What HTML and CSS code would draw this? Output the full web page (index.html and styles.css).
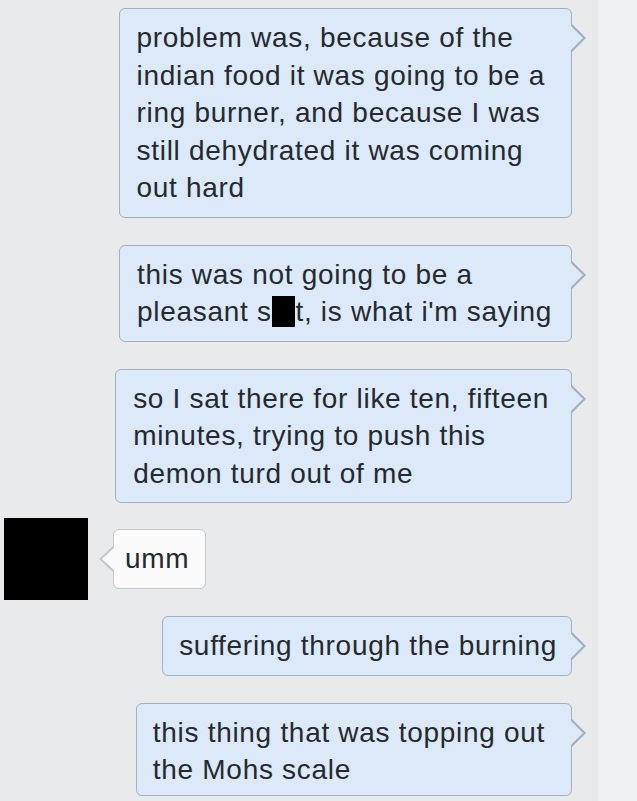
FILE: index.html
```html
<!DOCTYPE html>
<html lang="en">
<head>
<meta charset="utf-8">
<title>Chat</title>
<link rel="stylesheet" href="styles.css">
</head>
<body>
<div class="chat">
  <div class="row out">
    <div class="bubble sent b1">problem was, because of the<br>indian food it was going to be a<br>ring burner, and because I was<br>still dehydrated it was coming<br>out hard</div>
  </div>
  <div class="row out">
    <div class="bubble sent b2">this was not going to be a<br>pleasant s<span class="redact">hi</span>t, is what i'm saying</div>
  </div>
  <div class="row out">
    <div class="bubble sent b3">so I sat there for like ten, fifteen<br>minutes, trying to push this<br>demon turd out of me</div>
  </div>
  <div class="row in">
    <div class="avatar"></div>
    <div class="bubble received">umm</div>
  </div>
  <div class="row out">
    <div class="bubble sent b5">suffering through the burning</div>
  </div>
  <div class="row out">
    <div class="bubble sent b6">this thing that was topping out<br>the Mohs scale</div>
  </div>
</div>
</body>
</html>
```
FILE: styles.css
```css
html, body {
  margin: 0;
  padding: 0;
}
body {
  background: #eef0f1;
  font-family: "Liberation Sans", Arial, sans-serif;
  color: #262a2f;
}
.chat {
  width: 598px;
  min-height: 801px;
  background: #e9eaec;
  padding-top: 8px;
  box-sizing: border-box;
  display: flex;
  flex-direction: column;
}
.row {
  display: flex;
}
.row.out {
  justify-content: flex-end;
  padding-right: 26px;
  margin-bottom: 27px;
}
.row.in {
  align-items: center;
  padding-left: 4px;
  margin-top: -12px;
  margin-bottom: 16px;
}
.bubble {
  position: relative;
  font-size: 28px;
  letter-spacing: 0.7px;
  line-height: 37.5px;
  white-space: nowrap;
  border-radius: 6px;
  padding: 10px 18px 10px 17px;
}
.sent {
  background: #dce9f8;
  border: 1px solid #a2afbd;
}
.b1 { padding-right: 26px; }
.b2 { padding-right: 19px; }
.b3 { padding-right: 22px; }
.b5 { padding-left: 16px; padding-right: 14px; }
.b6 { padding-left: 16px; padding-right: 26px; padding-bottom: 6px; }
.sent::before,
.sent::after {
  content: "";
  position: absolute;
  width: 0;
  height: 0;
  border-style: solid;
  border-color: transparent;
}
.sent::before {
  left: 100%;
  top: 14px;
  border-width: 15px 0 15px 15px;
  border-left-color: #a2afbd;
}
.sent::after {
  left: calc(100% - 1px);
  top: 16px;
  border-width: 13px 0 13px 13px;
  border-left-color: #dce9f8;
}
.redact {
  background: #000;
  color: #000;
  letter-spacing: 0;
  padding: 0 1px;
}
.avatar {
  width: 84px;
  height: 82px;
  background: #000;
  flex: none;
}
.received {
  margin-left: 25px;
  background: #fbfbfb;
  border: 1px solid #c6c8cb;
  padding: 10px 16px 10px 11px;
}
.received::before,
.received::after {
  content: "";
  position: absolute;
  width: 0;
  height: 0;
  border-style: solid;
  border-color: transparent;
}
.received::before {
  right: 100%;
  top: 15px;
  border-width: 14px 15px 14px 0;
  border-right-color: #c6c8cb;
}
.received::after {
  right: calc(100% - 1px);
  top: 17px;
  border-width: 12px 13px 12px 0;
  border-right-color: #fbfbfb;
}
```
